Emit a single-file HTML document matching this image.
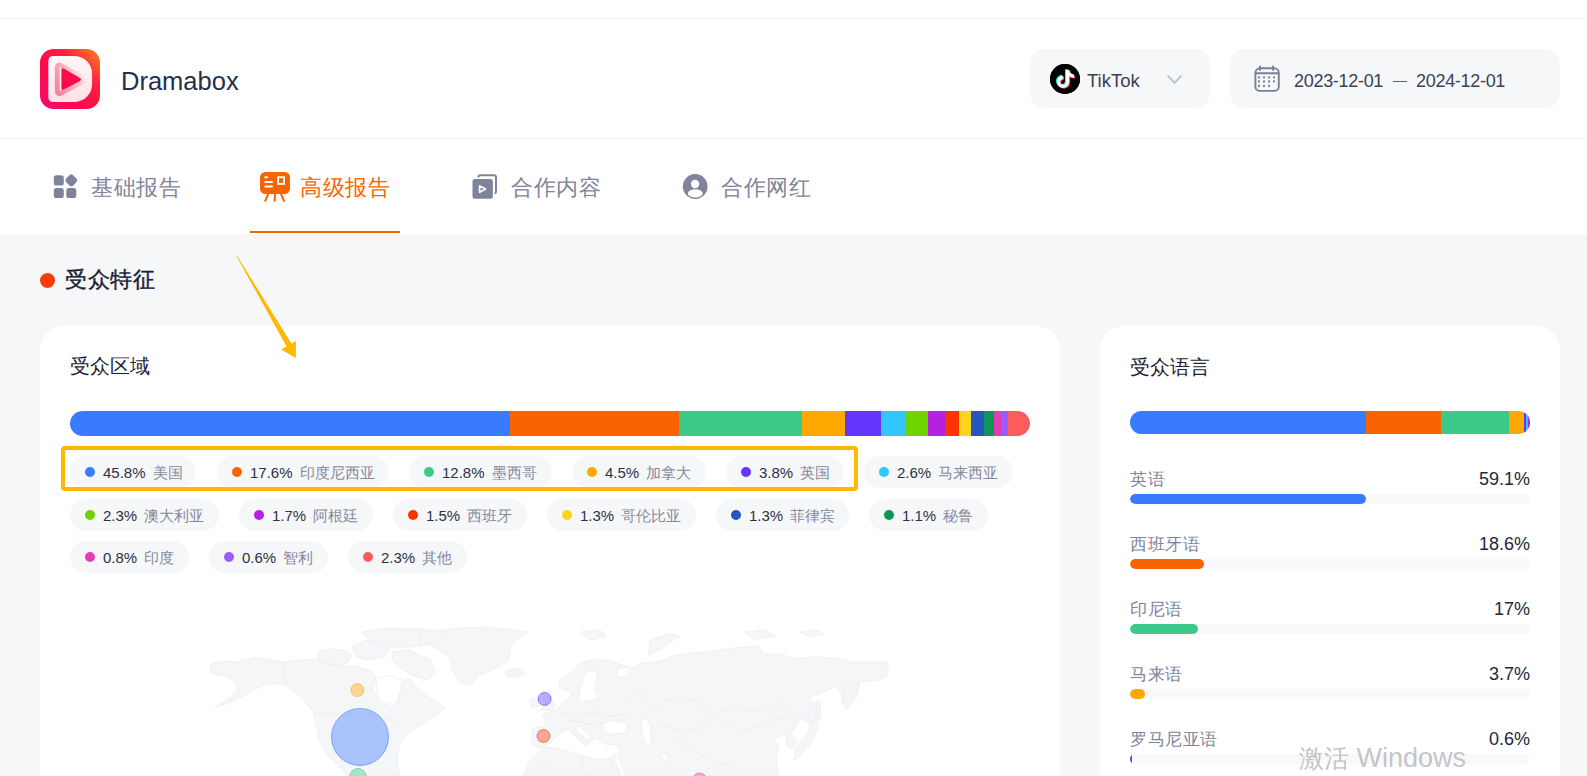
<!DOCTYPE html>
<html><head><meta charset="utf-8">
<style>
*{margin:0;padding:0;box-sizing:border-box}
html,body{width:1587px;height:776px;overflow:hidden;background:#f6f7f9;font-family:"Liberation Sans",sans-serif}
.abs{position:absolute}
.t{position:absolute;white-space:nowrap;line-height:1}
#top{left:0;top:0;width:1587px;height:235px;background:#fff}
#line1{left:0;top:18px;width:1587px;height:1px;background:#f0f1f4}
#line2{left:0;top:138px;width:1587px;height:1px;background:#f0f1f4}
#logo{left:40px;top:49px;width:60px;height:60px;border-radius:15px;background:linear-gradient(45deg,#f5006a 0%,#ff0a46 50%,#ff7a1e 100%)}
.sel{background:#f6f7f9;border-radius:15px;height:59px;top:49px}
.tab{font-size:22px;letter-spacing:0.7px;color:#7f8499;top:176.5px}
.chip{position:absolute;height:32px;border-radius:16px;background:#f6f7f9;white-space:nowrap;padding-left:15px;line-height:32px;font-size:0}
.chip i{display:inline-block;vertical-align:top;margin-top:11px;width:10px;height:10px;border-radius:5px}
.chip b{display:inline-block;vertical-align:top;margin-left:8px;margin-top:1px;font-weight:400;font-size:15px;line-height:32px;color:#2b3246}
.chip s{display:inline-block;vertical-align:top;margin-left:7px;margin-top:1px;text-decoration:none;font-size:15px;line-height:32px;color:#858a9d}
.card{background:#fff;border-radius:24px;top:326px;height:480px}
.lang{position:absolute;left:1130px;width:400px;height:60px}
.lang .nm{position:absolute;left:0;top:-0.5px;font-size:17px;letter-spacing:0.5px;line-height:17px;color:#7f8499}
.lang .pc{position:absolute;right:0;top:0;font-size:18px;line-height:17px;color:#1d2840}
.lang .tr{position:absolute;left:0;top:23px;width:400px;height:10px;border-radius:5px;background:#f8f9fb;overflow:hidden}
.lang .tr u{position:absolute;left:0;top:0;height:10px;border-radius:5px}

.bar{position:absolute;display:flex;overflow:hidden}
.bar u{display:block;height:100%;flex:none}
</style></head>
<body>
<div id="top" class="abs"></div>
<div id="line1" class="abs"></div>
<div id="line2" class="abs"></div>

<!-- header -->
<div class="t" style="left:121px;top:69px;font-size:25.5px;color:#22304a">Dramabox</div>

<div class="abs sel" style="left:1030px;width:180px"></div>
<div class="abs" style="left:1050px;top:64px;width:30px;height:30px;border-radius:15px;background:#000"></div>
<div class="t" style="left:1087px;top:71.5px;font-size:18.5px;color:#3a4255">TikTok</div>

<div class="abs sel" style="left:1230px;width:330px"></div>
<div class="t" style="left:1294px;top:72px;font-size:18px;letter-spacing:-0.3px;color:#3a4255">2023-12-01</div>
<div class="abs" style="left:1393px;top:81px;width:14px;height:1px;background:#5a6070"></div>
<div class="t" style="left:1416px;top:72px;font-size:18px;letter-spacing:-0.3px;color:#3a4255">2024-12-01</div>

<!-- tabs -->
<div class="t tab" style="left:91px">基础报告</div>
<div class="t tab" style="left:300px;color:#fa6400">高级报告</div>
<div class="abs" style="left:250px;top:231px;width:150px;height:2px;background:#fa6400"></div>
<div class="t tab" style="left:511px">合作内容</div>
<div class="t tab" style="left:721px">合作网红</div>

<!-- section title -->
<div class="abs" style="left:40px;top:273px;width:15px;height:15px;border-radius:8px;background:#fa3c00"></div>
<div class="t" style="left:65px;top:268.7px;font-size:22px;letter-spacing:0.5px;font-weight:500;-webkit-text-stroke:0.4px #1a1f36;color:#1a1f36">受众特征</div>

<!-- cards -->
<div class="abs card" style="left:40px;width:1020px"></div>
<div class="abs card" style="left:1100px;width:460px"></div>

<div class="t" style="left:70px;top:356px;font-size:20px;color:#1a1f36">受众区域</div>
<div class="t" style="left:1130px;top:357px;font-size:20px;color:#1a1f36">受众语言</div>


<!-- icons header -->
<svg class="abs" style="left:40px;top:49px" width="60" height="60" viewBox="0 0 60 60">
<defs>
<linearGradient id="lgo" x1="0" y1="1" x2="1" y2="0"><stop offset="0" stop-color="#f20a70"/><stop offset="0.4" stop-color="#ff0a4a"/><stop offset="0.68" stop-color="#ff2040"/><stop offset="1" stop-color="#ff8a1c"/></linearGradient>
<linearGradient id="lgd" x1="0" y1="0" x2="0" y2="1"><stop offset="0" stop-color="#fff7f8"/><stop offset="1" stop-color="#fde1e6"/></linearGradient>
<linearGradient id="lgr" x1="0" y1="0.8" x2="1" y2="0.2"><stop offset="0" stop-color="#f28aa0"/><stop offset="0.5" stop-color="#f7b3c1"/><stop offset="1" stop-color="#fdf2f4"/></linearGradient>
<filter id="fbl" x="-20%" y="-20%" width="140%" height="140%"><feGaussianBlur stdDeviation="0.7"/></filter>
</defs>
<rect x="0" y="0" width="60" height="60" rx="13.5" fill="url(#lgo)"/>
<path d="M13.5,7 H33.7 C44.5,7 52.1,15 52.1,25 V35 C52.1,45 44.5,53 33.7,53 H13.5 Q8.3,53 8.3,47.7 V12.3 Q8.3,7 13.5,7Z" fill="url(#lgd)"/>
<path d="M17.3,19 Q17.3,14.6 21.2,16.6 L41.5,27.6 Q45.3,30.5 41.5,33.3 L21.2,44 Q17.3,46 17.3,41.6Z" fill="none" stroke="url(#lgr)" stroke-width="5" stroke-linejoin="round" filter="url(#fbl)"/>
<path d="M21.4,21 Q21.4,18.3 23.8,19.6 L40,29 Q42,30.6 40,32 L23.8,40.6 Q21.4,42 21.4,39.3Z" fill="#ff0a4a"/>
</svg>

<svg class="abs" style="left:1050px;top:64px" width="30" height="30" viewBox="0 0 30 30">
<circle cx="15" cy="15" r="15" fill="#000"/>
<g transform="translate(-1,-0.8)"><path d="M17.6,6.3 V17.8 A4.5,4.5 0 1 1 13.1,13.3" fill="none" stroke="#25f4ee" stroke-width="3.3"/><path d="M16,6.3 H19.2 Q19.7,10.2 24,10.8 V13.8 Q21.3,13.7 19.2,12.2 Z" fill="#25f4ee"/></g>
<g transform="translate(1,0.8)"><path d="M17.6,6.3 V17.8 A4.5,4.5 0 1 1 13.1,13.3" fill="none" stroke="#fe2c55" stroke-width="3.3"/><path d="M16,6.3 H19.2 Q19.7,10.2 24,10.8 V13.8 Q21.3,13.7 19.2,12.2 Z" fill="#fe2c55"/></g>
<g transform="translate(0,0)"><path d="M17.6,6.3 V17.8 A4.5,4.5 0 1 1 13.1,13.3" fill="none" stroke="#fff" stroke-width="3.3"/><path d="M16,6.3 H19.2 Q19.7,10.2 24,10.8 V13.8 Q21.3,13.7 19.2,12.2 Z" fill="#fff"/></g>
</svg>
<svg class="abs" style="left:1164px;top:72px" width="22" height="14" viewBox="0 0 22 14"><path d="M3.5,3.5 L10.5,10.8 L17.5,3.5" fill="none" stroke="#b3bac8" stroke-width="1.6"/></svg>

<svg class="abs" style="left:1252px;top:64px" width="30" height="30" viewBox="0 0 30 30">
<g fill="none" stroke="#7b8097" stroke-width="1.9">
<rect x="3.4" y="4.3" width="23.4" height="22.6" rx="4.5"/>
<path d="M3.4,9.2 H26.8 M8,1.8 V6.8 M21,1.8 V6.8"/>
</g>
<g fill="#7b8097">
<circle cx="7" cy="13.4" r="1.15"/><circle cx="12" cy="13.4" r="1.15"/><circle cx="17" cy="13.4" r="1.15"/><circle cx="22" cy="13.4" r="1.15"/>
<circle cx="7" cy="17.5" r="1.15"/><circle cx="12" cy="17.5" r="1.15"/><circle cx="17" cy="17.5" r="1.15"/><circle cx="22" cy="17.5" r="1.15"/>
<circle cx="7" cy="22" r="1.15"/><circle cx="12" cy="22" r="1.15"/><circle cx="17" cy="22" r="1.15"/>
</g>
</svg>

<!-- tab icons -->
<svg class="abs" style="left:50px;top:172px" width="30" height="30" viewBox="0 0 30 30">
<g fill="#7f849c">
<rect x="3.8" y="3.2" width="10" height="10.4" rx="2.6"/>
<rect x="3.8" y="16" width="10" height="10" rx="2.6"/>
<rect x="16.3" y="16" width="10" height="10" rx="2.6"/>
<rect x="16.4" y="3.4" width="9.8" height="9.8" rx="2.6" transform="rotate(45 21.3 8.3)"/>
</g>
</svg>
<svg class="abs" style="left:255px;top:166px" width="40" height="40" viewBox="0 0 40 40">
<rect x="5" y="6" width="30" height="22" rx="5.5" fill="#fa6400"/>
<g stroke="#fa6400" stroke-width="2" stroke-linecap="round"><path d="M13,28.5 L10.2,34.8 M20,28.5 L19.7,34.8 M26.2,28.5 L29,34.8"/></g>
<g stroke="#fff" stroke-width="2" stroke-linecap="round"><path d="M10.3,11.3 H12.2 M10.3,16 H17 M10.3,20.6 H17"/></g>
<rect x="23.1" y="11.2" width="5.9" height="6.7" fill="none" stroke="#fff" stroke-width="1.85"/>
</svg>
<svg class="abs" style="left:466px;top:168px" width="36" height="36" viewBox="0 0 36 36">
<path d="M12.3,9.4 Q12.3,7.3 14.4,7.3 H28 Q30,7.3 30,9.3 V23.6 Q30,25.2 28.6,25.4" fill="none" stroke="#7f849c" stroke-width="2"/>
<rect x="6.5" y="10.9" width="20.4" height="19.9" rx="2.4" fill="#7f849c"/>
<path d="M13.6,17.9 V24.2 L19.6,21.05Z" fill="none" stroke="#fff" stroke-width="1.7" stroke-linejoin="round"/>
</svg>
<svg class="abs" style="left:676px;top:168px" width="36" height="36" viewBox="0 0 36 36">
<circle cx="19.2" cy="18.5" r="12.4" fill="#7f849c"/>
<circle cx="19.1" cy="16" r="4.2" fill="#fff"/>
<ellipse cx="19.3" cy="25.4" rx="7.4" ry="4.2" fill="#fff"/>
</svg>

<!-- arrow -->
<svg class="abs" style="left:0;top:0" width="1587" height="400">
<path d="M236.4,256.1 L237.0,255.7 L292.3,345.0 L287.4,348.0 Z" fill="#ffb800"/>
<path d="M295.9,357.9 L281.1,349.6 L295.9,341.1Z" fill="#ffb800"/>
</svg>

<svg class="abs" style="left:0;top:0" width="1060" height="776" viewBox="0 0 1060 776">
<path d="M211,664 L222,661 L237,662 L255,657 L285,662 L300,660 L316,659 L334,665 L358,667 L372,671 L376,678 L373,690 L380,702 L392,708 L398,704 L400,690 L404,680 L410,679 L418,688 L428,697 L440,704 L445,709 L432,717 L424,723 L412,730 L404,737 L400,745 L398,752 L397,762 L400,776 L348,776 L338,765 L326,753 L319,740 L317,728 L313,712 L302,698 L292,690 L284,684 L268,684 L252,690 L240,698 L226,704 L215,707 L230,698 L238,688 L232,679 L222,675 L211,673Z M318,652 L330,649 L345,650 L352,656 L346,664 L330,665 L318,662Z M352,646 L368,640 L380,642 L390,650 L382,658 L366,660 L356,656Z M362,632 L390,628 L420,629 L445,632 L440,640 L420,646 L395,648 L372,644Z M392,652 L410,650 L430,660 L436,672 L428,680 L414,676 L400,668 L392,660Z M420,632 L461,628 L489,627 L528,632 L518,638 L511,646 L509,660 L495,669 L480,675 L470,685 L461,683 L453,671 L449,657 L432,646 L420,644Z M505,672 L512,669 L522,669 L525,673 L518,677 L508,677Z M543,691 L550,692 L551,698 L555,706 L553,710 L541,710 L546,703 L542,697Z M531,699 L539,698 L539,706 L531,707Z M532,745 L532,734 L533,728 L546,726 L543,714 L557,710 L562,703 L571,698 L571,693 L566,690 L559,687 L560,680 L573,671 L580,663 L594,659 L611,661 L625,666 L632,668 L643,663 L660,661 L676,655 L692,653 L713,651 L734,648 L758,646 L763,653 L783,655 L793,658 L818,657 L835,658 L853,662 L888,662 L888,675 L879,680 L860,682 L856,692 L842,705 L842,694 L835,687 L808,698 L814,703 L819,714 L811,724 L800,719 L793,731 L783,735 L772,740 L779,745 L776,759 L779,776 L523,776 L530,761 L543,749Z M786,735 L792,734 L796,742 L792,749 L787,746Z M808,716 L816,714 L818,728 L812,742 L800,756 L794,760 L796,748 L806,736 L810,726Z M846,684 L860,682 L856,698 L846,710 L843,698Z M816,702 L820,701 L821,720 L817,720Z M580,632 L600,630 L606,636 L590,640Z M650,640 L670,634 L680,636 L662,648 L648,656Z M745,632 L765,630 L775,636 L755,640Z M800,632 L815,630 L825,634 L810,637Z" fill="#f5f6f8" stroke="#eceef2" stroke-width="0.8" stroke-linejoin="round"/>
<path d="M541,747 L552,742 L560,732 L568,729 L575,736 L584,745 L588,746 L592,740 L597,738 L604,744 L618,745 L620,752 L612,758 L598,760 L584,756 L570,752 L556,748Z M575,726 L580,727 L591,737 L587,740 L577,732Z M578,700 L580,689 L583,680 L586,672 L597,671 L596,685 L594,692 L600,697 L590,701 L580,702Z M616,668 L630,668 L628,677 L618,677Z M602,724 L612,720 L627,724 L626,733 L612,734 L603,731Z M641,719 L647,718 L651,728 L651,744 L645,744 L642,732Z M613,754 L617,754 L626,776 L621,776Z M660,752 L666,754 L670,760 L664,760Z M376,678 L390,676 L402,680 L400,692 L396,704 L386,704 L378,696Z" fill="#fff" stroke="#eceef2" stroke-width="0.8" stroke-linejoin="round"/>
<g fill="none" stroke="#eaecf0" stroke-width="0.8" stroke-linejoin="round">
<path d="M285,662 V684"/>
<path d="M316,713.5 L376,713.5 L386,718 L396,722"/>
<path d="M660,708 L665,701 L681,698 L695,701 L704,708 L714,714 L735,708 L753,712 L769,708 L779,703 L790,710 L802,717 L814,707"/>
<path d="M714,714 L721,722 L741,731 L758,726 L774,719 L798,717"/>
<path d="M660,724 L679,731 L700,728 L713,715"/>
<path d="M677,740 L695,752 L718,763 L734,766"/>
<path d="M625,700 L640,690 L650,705 L645,718 M560,712 L575,716 L595,712 L610,716 L628,714 M566,720 L590,724 L604,722 M590,700 L600,712 M540,760 L560,776 M580,754 L585,776 M610,758 L615,776"/>
</g>
<g>
<circle cx="360" cy="737" r="28.5" fill="rgba(58,122,254,0.4)" stroke="rgba(58,122,254,0.55)" stroke-width="1"/>
<circle cx="357.3" cy="690" r="6.5" fill="rgba(255,168,0,0.4)" stroke="rgba(255,168,0,0.55)" stroke-width="1"/>
<circle cx="544.6" cy="699" r="6.5" fill="rgba(98,54,255,0.4)" stroke="rgba(98,54,255,0.55)" stroke-width="1"/>
<circle cx="543.5" cy="736" r="6.5" fill="rgba(250,51,0,0.4)" stroke="rgba(250,51,0,0.55)" stroke-width="1"/>
<circle cx="358" cy="777" r="8.5" fill="rgba(60,201,138,0.4)" stroke="rgba(60,201,138,0.55)" stroke-width="1"/>
<circle cx="699.5" cy="780" r="7" fill="rgba(228,60,180,0.4)" stroke="rgba(228,60,180,0.55)" stroke-width="1"/>
</g>
</svg>
<!-- left card content -->
<div class="bar" style="left:70px;top:411px;width:960px;height:25px;border-radius:12.5px"><u style="width:45.8%;background:#3a7afe"></u><u style="width:17.6%;background:#fa6400"></u><u style="width:12.8%;background:#3cc98a"></u><u style="width:4.5%;background:#ffa800"></u><u style="width:3.8%;background:#6236ff"></u><u style="width:2.6%;background:#32c5ff"></u><u style="width:2.3%;background:#6dd400"></u><u style="width:1.7%;background:#b620e0"></u><u style="width:1.5%;background:#fa3300"></u><u style="width:1.3%;background:#fdd41c"></u><u style="width:1.3%;background:#2356bf"></u><u style="width:1.1%;background:#0d9656"></u><u style="width:0.8%;background:#e43cb4"></u><u style="width:0.6%;background:#9a5cf8"></u><u style="width:2.3%;background:#fd5c5c"></u></div>
<div class="chip" style="left:70px;top:456px;width:126px"><i style="background:#3a7afe"></i><b>45.8%</b><s>美国</s></div>
<div class="chip" style="left:217px;top:456px;width:172px"><i style="background:#fa6400"></i><b>17.6%</b><s>印度尼西亚</s></div>
<div class="chip" style="left:409px;top:456px;width:143px"><i style="background:#3cc98a"></i><b>12.8%</b><s>墨西哥</s></div>
<div class="chip" style="left:572px;top:456px;width:134px"><i style="background:#ffa800"></i><b>4.5%</b><s>加拿大</s></div>
<div class="chip" style="left:726px;top:456px;width:118px"><i style="background:#6236ff"></i><b>3.8%</b><s>英国</s></div>
<div class="chip" style="left:864px;top:456px;width:149px"><i style="background:#32c5ff"></i><b>2.6%</b><s>马来西亚</s></div>
<div class="chip" style="left:70px;top:499px;width:149px"><i style="background:#6dd400"></i><b>2.3%</b><s>澳大利亚</s></div>
<div class="chip" style="left:239px;top:499px;width:134px"><i style="background:#b620e0"></i><b>1.7%</b><s>阿根廷</s></div>
<div class="chip" style="left:393px;top:499px;width:134px"><i style="background:#fa3300"></i><b>1.5%</b><s>西班牙</s></div>
<div class="chip" style="left:547px;top:499px;width:149px"><i style="background:#fdd41c"></i><b>1.3%</b><s>哥伦比亚</s></div>
<div class="chip" style="left:716px;top:499px;width:133px"><i style="background:#2356bf"></i><b>1.3%</b><s>菲律宾</s></div>
<div class="chip" style="left:869px;top:499px;width:119px"><i style="background:#0d9656"></i><b>1.1%</b><s>秘鲁</s></div>
<div class="chip" style="left:70px;top:541px;width:119px"><i style="background:#e43cb4"></i><b>0.8%</b><s>印度</s></div>
<div class="chip" style="left:209px;top:541px;width:119px"><i style="background:#9a5cf8"></i><b>0.6%</b><s>智利</s></div>
<div class="chip" style="left:348px;top:541px;width:119px"><i style="background:#fd5c5c"></i><b>2.3%</b><s>其他</s></div>
<div class="abs" style="left:61px;top:446px;width:797px;height:45px;border:4px solid #ffb800;border-radius:4px"></div>

<!-- right card content -->
<div class="bar" style="left:1130px;top:411px;width:400px;height:23px;border-radius:11.5px"><u style="width:59.1%;background:#3a7afe"></u><u style="width:18.6%;background:#fa6400"></u><u style="width:17%;background:#3cc98a"></u><u style="width:3.7%;background:#ffa800"></u><u style="width:0.6%;background:#6236ff"></u><u style="width:0.15%;background:#32c5ff"></u><u style="width:0.25%;background:#6dd400"></u><u style="width:0.6%;background:#b620e0"></u></div>

<div class="lang" style="top:471px"><div class="nm">英语</div><div class="pc">59.1%</div><div class="tr"><u style="width:59.1%;background:#3a7afe"></u></div></div>
<div class="lang" style="top:536px"><div class="nm">西班牙语</div><div class="pc">18.6%</div><div class="tr"><u style="width:18.6%;background:#fa6400"></u></div></div>
<div class="lang" style="top:601px"><div class="nm">印尼语</div><div class="pc">17%</div><div class="tr"><u style="width:17%;background:#3cc98a"></u></div></div>
<div class="lang" style="top:666px"><div class="nm">马来语</div><div class="pc">3.7%</div><div class="tr"><u style="width:3.7%;background:#ffa800"></u></div></div>
<div class="lang" style="top:731px"><div class="nm">罗马尼亚语</div><div class="pc">0.6%</div><div class="tr"><u style="width:0.6%;background:#6236ff"></u></div></div>

<div class="t" style="left:1299px;top:746px;font-size:25px;color:rgba(110,110,110,0.42)">激活</div><div class="t" style="left:1356.5px;top:744.5px;font-size:27px;color:rgba(110,110,110,0.40)">Windows</div>

</body></html>
